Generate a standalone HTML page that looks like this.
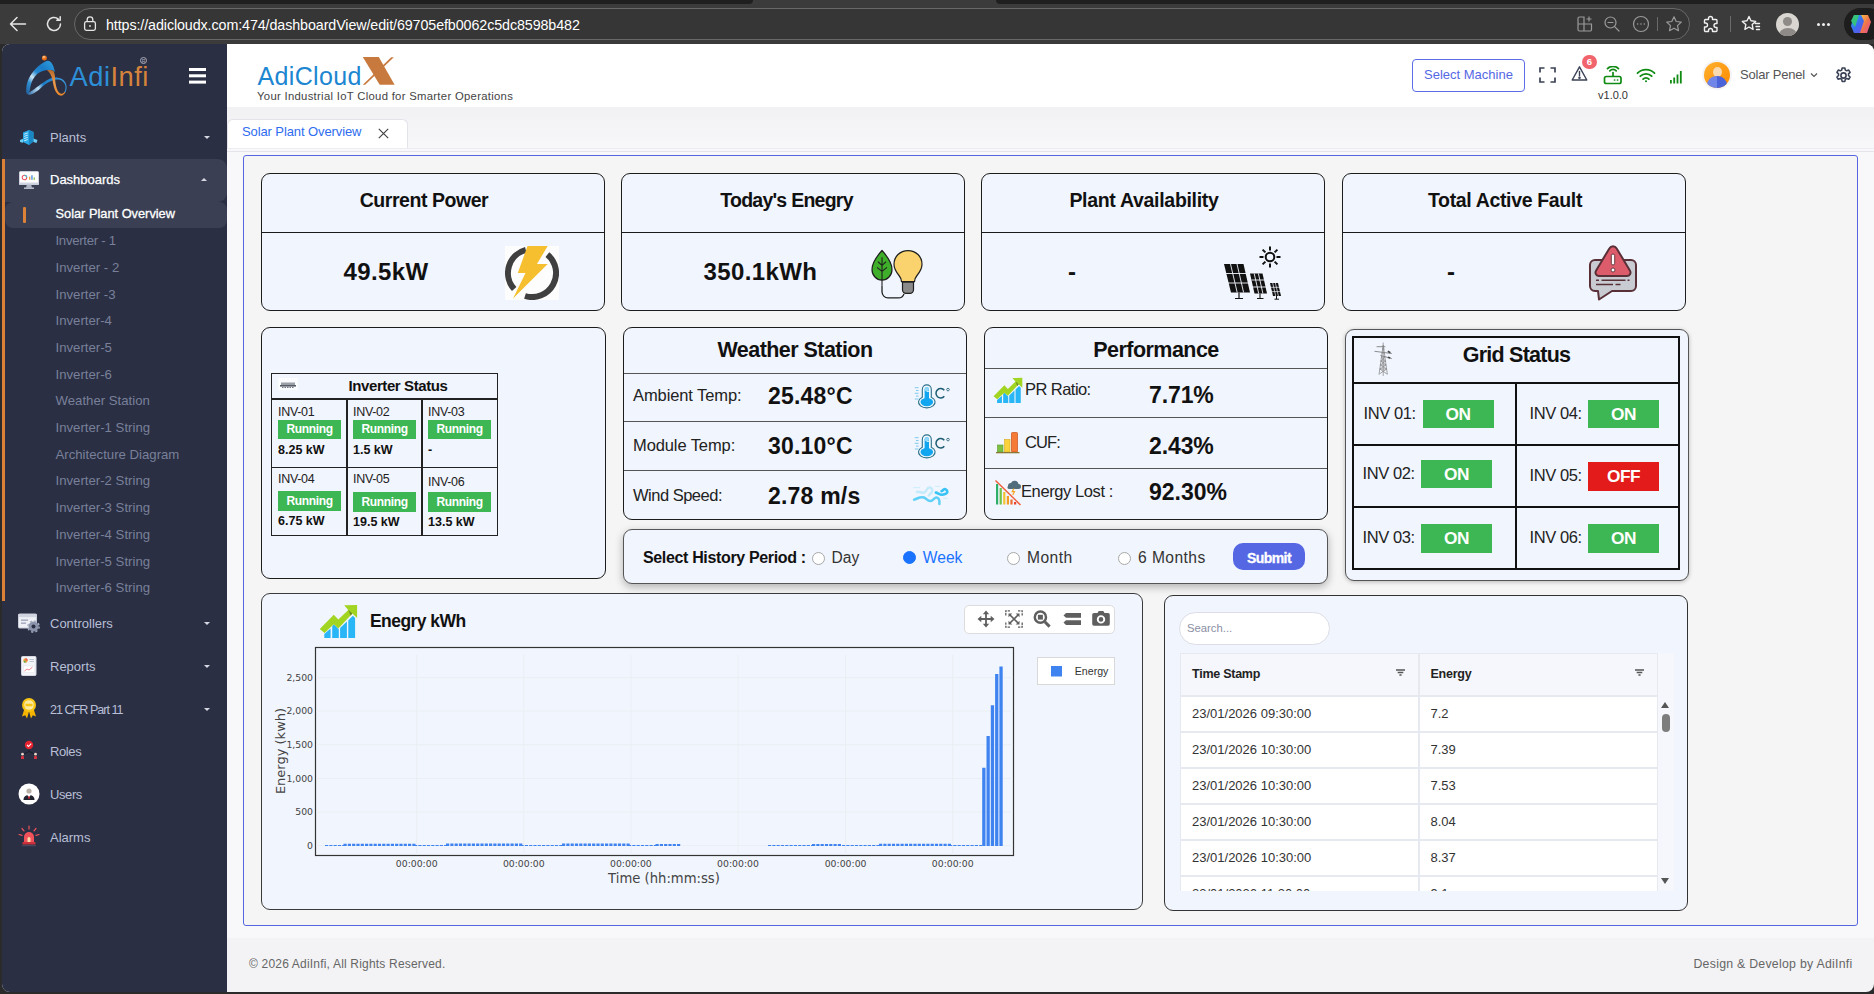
<!DOCTYPE html>
<html lang="en">
<head>
<meta charset="utf-8">
<title>Solar Plant Overview</title>
<style>
*{box-sizing:border-box;margin:0;padding:0}
html,body{width:1874px;height:994px;overflow:hidden;background:#f3f3f5;font-family:"Liberation Sans",sans-serif;}
.abs{position:absolute}
#root{position:relative;width:1874px;height:994px;overflow:hidden;background:#2b2b2b}
/* browser chrome */
#chrome{position:absolute;left:0;top:0;width:1874px;height:44px;background:#3b3b3b}
#chrome .strip{position:absolute;left:0;top:0;width:1874px;height:4px;background:#1f1f1f}
#url{position:absolute;left:74px;top:8px;width:1616px;height:32px;border-radius:16px;background:#363636;border:1px solid #686868}
#urltext{position:absolute;left:106px;top:16.700px;font-size:14.3px;line-height:17px;color:#fff;white-space:nowrap;letter-spacing:-0.1px}
/* app */
#app{position:absolute;left:2px;top:44px;width:1872px;height:947px;background:#f3f3f5;border-radius:10px 10px 10px 0;overflow:hidden}
#side{position:absolute;left:0;top:0;width:225px;height:947px;background:#2a2f43}
#head{position:absolute;left:225px;top:0;width:1647px;height:63px;background:#fff}
.t{position:absolute;white-space:nowrap;line-height:1}
.mi{position:absolute;margin-top:0.5px;left:48px;color:#b9bfd6;font-size:13px;white-space:nowrap;line-height:16px}
.si{position:absolute;left:53.5px;color:#79809a;font-size:13.2px;white-space:nowrap;line-height:16px}
.caret{position:absolute;left:202px;width:0;height:0;border-left:3px solid transparent;border-right:3px solid transparent;border-top:3.5px solid #d5d8e2}
.card{position:absolute;background:#f1f5fd;border:1px solid #1c1c1c;border-radius:9px}
.hl{position:absolute;height:1.5px;background:#1a1a1a}
.b{font-weight:bold}
.run{position:absolute;width:62.5px;height:19px;background:#3db654;color:#fff;font-weight:bold;font-size:12px;line-height:19px;text-align:center;letter-spacing:-0.35px;margin-left:0.4px}
.on{position:absolute;width:71px;height:28px;background:#3db654;color:#fff;font-weight:bold;font-size:17.3px;line-height:28px;text-align:center;letter-spacing:-0.45px}
.gl{position:absolute;font-size:16.5px;color:#222;white-space:nowrap;line-height:20px;letter-spacing:-0.4px;margin-left:0.5px}
.radio{position:absolute;width:13px;height:13px;margin:-0.5px;border:1px solid #a8a8a8;border-radius:50%;background:#fff}
.rl{position:absolute;margin-top:0.5px;font-size:15.6px;color:#333;line-height:20px;white-space:nowrap}
.cell{position:absolute;font-size:13px;color:#333;white-space:nowrap;line-height:16px}
</style>
</head>
<body>
<div id="root">
<div id="chrome">
  <div class="abs" style="left:0;top:0;width:753px;height:3.700px;background:#1f1f1f;border-radius:0 0 6px 0"></div>
  <div class="abs" style="left:996px;top:0;width:878px;height:3.700px;background:#1f1f1f;border-radius:0 0 0 6px"></div>
  <svg class="abs" style="left:8px;top:14px" width="20" height="20" viewBox="0 0 20 20" fill="none" stroke="#e6e6e6" stroke-width="1.5" stroke-linecap="round" stroke-linejoin="round"><path d="M17.5 10H2.5M9 3.5L2.5 10L9 16.5"/></svg>
  <svg class="abs" style="left:44px;top:14px" width="20" height="20" viewBox="0 0 20 20" fill="none" stroke="#e6e6e6" stroke-width="1.5" stroke-linecap="round" stroke-linejoin="round"><path d="M16.5 10a6.5 6.5 0 1 1-2.2-4.9M16.2 2.8v3.4h-3.4"/></svg>
  <div id="url"></div>
  <svg class="abs" style="left:82px;top:15px" width="16" height="18" viewBox="0 0 16 18" fill="none" stroke="#e6e6e6" stroke-width="1.3"><rect x="2.6" y="6.6" width="10.8" height="8.8" rx="1.8"/><path d="M5.2 6.6V4.6a2.8 2.8 0 0 1 5.6 0v2"/><circle cx="8" cy="11" r="0.9" fill="#e6e6e6" stroke="none"/></svg>
  <div id="urltext">https://adicloudx.com:474/dashboardView/edit/69705efb0062c5dc8598b482</div>
  <!-- right icons -->
  <svg class="abs" style="left:1576px;top:15px" width="18" height="18" viewBox="0 0 18 18" fill="none" stroke="#9a9a9a" stroke-width="1.2"><path d="M2 3.5a1.5 1.5 0 0 1 1.500-1.500H8v14H3.500A1.500 1.500 0 0 1 2 14.500zM8 9h7.500v5.500a1.500 1.500 0 0 1-1.500 1.500H8M2 9h6M13 1.500v5M10.500 4h5"/></svg>
  <svg class="abs" style="left:1603px;top:15px" width="18" height="18" viewBox="0 0 18 18" fill="none" stroke="#9a9a9a" stroke-width="1.2" stroke-linecap="round"><circle cx="7.500" cy="7.500" r="5.500"/><path d="M11.600 11.600L16 16M5 7.500h5"/></svg>
  <svg class="abs" style="left:1632px;top:15px" width="18" height="18" viewBox="0 0 18 18" fill="none" stroke="#9a9a9a" stroke-width="1.2"><circle cx="9" cy="9" r="7.500"/><circle cx="5.700" cy="9" r="0.800" fill="#9a9a9a" stroke="none"/><circle cx="9" cy="9" r="0.800" fill="#9a9a9a" stroke="none"/><circle cx="12.300" cy="9" r="0.800" fill="#9a9a9a" stroke="none"/></svg>
  <div class="abs" style="left:1657px;top:17px;width:1px;height:14px;background:#6a6a6a"></div>
  <svg class="abs" style="left:1665px;top:15px" width="18" height="18" viewBox="0 0 18 18" fill="none" stroke="#9a9a9a" stroke-width="1.2" stroke-linejoin="round"><path d="M9 1.800l2.200 4.700 5.100.600-3.800 3.500 1 5.100L9 13.200l-4.500 2.500 1-5.100L1.700 7.100l5.100-.600z"/></svg>
  <svg class="abs" style="left:1701px;top:14px" width="20" height="20" viewBox="0 0 20 20" fill="none" stroke="#f0f0f0" stroke-width="1.4" stroke-linejoin="round"><path d="M7.500 4.500a2 2 0 0 1 4 0V5.500h3.500a1 1 0 0 1 1 1V9.500h-1a2 2 0 0 0 0 4h1v3a1 1 0 0 1-1 1h-3.500v-1a2 2 0 0 0-4 0v1H4.500a1 1 0 0 1-1-1v-3.500h1a2 2 0 0 0 0-4h-1V6.500a1 1 0 0 1 1-1H7.500z"/></svg>
  <div class="abs" style="left:1730px;top:16px;width:1px;height:16px;background:#6a6a6a"></div>
  <svg class="abs" style="left:1741px;top:14px" width="20" height="20" viewBox="0 0 20 20" fill="none" stroke="#f0f0f0" stroke-width="1.4" stroke-linejoin="round" stroke-linecap="round"><path d="M8 2.500l2 4.300 4.700.600-3.500 3.200.9 4.700L8 13l-4.100 2.300.9-4.700L1.300 7.400 6 6.800zM14.500 9.500h4M15 12.500h3.500M15.500 15.500h3"/></svg>
  <div class="abs" style="left:1776px;top:13px;width:23px;height:23px;border-radius:50%;background:#d9d6d2;overflow:hidden"><div class="abs" style="left:7px;top:4px;width:9px;height:9px;border-radius:50%;background:#8d8a87"></div><div class="abs" style="left:2.500px;top:14.500px;width:18px;height:14px;border-radius:50%;background:#8d8a87"></div></div>
  <div class="abs" style="left:1817px;top:23px;width:3px;height:3px;border-radius:50%;background:#f0f0f0;box-shadow:5px 0 0 #f0f0f0,10px 0 0 #f0f0f0"></div>
  <div class="abs" style="left:1844px;top:8px;width:40px;height:32px;border-radius:16px;background:#1d1d1d"></div>
  <svg class="abs" style="left:1849px;top:12px" width="24" height="24" viewBox="0 0 24 24"><defs><linearGradient id="cp1" x1="0" y1="0" x2="1" y2="1"><stop offset="0" stop-color="#2bb3f3"/><stop offset=".5" stop-color="#3a6df0"/><stop offset="1" stop-color="#7a4ce0"/></linearGradient><linearGradient id="cp2" x1="0" y1="0" x2="1" y2="1"><stop offset="0" stop-color="#f6c744"/><stop offset=".5" stop-color="#f0744a"/><stop offset="1" stop-color="#e04aa0"/></linearGradient></defs><path d="M5 3h8l3 6-4 12H5l-3-7z" fill="url(#cp1)"/><path d="M12 3h7l3 7-4 11h-7l4-12z" fill="url(#cp2)"/><path d="M2 9l3-6h5L6 15z" fill="#35c27a"/></svg>
</div>

<div id="app" style="left:0;top:0;width:1874px;height:994px;border-radius:0;background:#f3f3f5;clip-path:inset(44px 0 2px 2px round 8px)">
<div id="side" style="left:2px;top:44px;width:225px;height:950px">
  <!-- logo -->
  <svg class="abs" style="left:18px;top:6px" width="60" height="50" viewBox="0 0 60 50">
    <defs><linearGradient id="lg1" gradientUnits="userSpaceOnUse" x1="6" y1="44" x2="34" y2="12"><stop offset="0" stop-color="#1d5f9e"/><stop offset=".25" stop-color="#2f8fd2"/><stop offset=".4" stop-color="#cfe6f5"/><stop offset=".55" stop-color="#2487d0"/><stop offset=".72" stop-color="#1b7cc8"/><stop offset="1" stop-color="#2f9fe0"/></linearGradient>
    <linearGradient id="lg3" gradientUnits="userSpaceOnUse" x1="7" y1="44" x2="46" y2="30"><stop offset="0" stop-color="#1d5f9e"/><stop offset=".3" stop-color="#bfe0f5"/><stop offset=".45" stop-color="#1b7cc8"/><stop offset="1" stop-color="#3a9be0"/></linearGradient>
    <linearGradient id="lg2" x1="0" y1="0" x2="0" y2="1"><stop offset="0" stop-color="#b86a2c"/><stop offset=".5" stop-color="#e89a4c"/><stop offset="1" stop-color="#e8862a"/></linearGradient>
    <radialGradient id="lg4" cx=".4" cy=".3" r=".7"><stop offset="0" stop-color="#ffd9b0"/><stop offset=".5" stop-color="#f07a1f"/><stop offset="1" stop-color="#d9601a"/></radialGradient></defs>
    <circle cx="24.4" cy="7.9" r="2.5" fill="url(#lg4)"/>
    <path d="M6.5 43.5C5.5 38 7 31 10 26.2 14 19.5 21 13 27.2 10.8c3.800-.8 6.800 5.200 7.800 11.200l-2-1.500c-2-.5-4-.5-6.100-.4-4.900.4-8.900 2.900-11.800 6.100-3.100 3.800-4.600 8.800-5.100 13-.2 2.300-1 3.800-3.500 4.300z" fill="url(#lg1)"/>
    <path d="M6.500 43.500C10 42.500 15 38.500 20.100 34.700c2.900-2.200 5.400-3.700 7.600-5 3.300-1.900 7.300-2.400 10.300-1.900s5.500 1.700 7 4.200c2.500 4 1.700 8.500.2 10.500l-.7-1c1.200-2 1.800-5.500-.3-8.500-1.700-2.500-4.200-3.400-6.200-3.500-3-.2-7 1.300-10.300 3.200-2.700 1.600-5.200 3.800-7.600 6-4.100 3.300-8.600 6.600-11.600 6.100z" fill="url(#lg3)"/>
    <path d="M27 20.200c2-.200 5-.200 6.500.800 1.500 3 1.500 6 1.700 9 .400 5 1.800 12 5.300 13.500 2 .700 3.500-.500 4.300-2l.5 1c-1.300 2.500-3.300 3.500-5.300 3-5-1.500-6.500-9.500-7.500-15.500-1-5-3-8-5.500-9.800z" fill="url(#lg2)"/>
  </svg>
  <div class="t" style="left:67.5px;top:16.4px;font-size:27.3px;line-height:34px;letter-spacing:0.5px"><span style="color:#2d8fd8">Adi</span><span style="color:#d6833c">Infi</span></div>
  <div class="t" style="left:138px;top:13px;font-size:7px;color:#aab;line-height:8px;border:0.6px solid #aab;border-radius:50%;width:7px;height:7px;text-align:center;font-size:5px;line-height:6px">R</div>
  <div class="abs" style="left:187px;top:23.5px;width:17px;height:3px;background:#fff;box-shadow:0 6.3px 0 #fff,0 12.6px 0 #fff"></div>

  <!-- Plants -->
  <svg class="abs" style="left:17px;top:85px" width="20" height="17" viewBox="0 0 20 17"><path d="M4 3.5L10 1l4.5 2v9.5L10 16 4 13z" fill="#29a9e6"/><path d="M10 1l4.5 2v9.5L10 16z" fill="#1b86c4"/><path d="M1 11l3-1.2v4L1 13zM14.5 9.5l4 1.5-1 3-3-1z" fill="#6ccdf5"/><path d="M5.2 5.2l3.6-1.3M5.2 7.4l3.6-1.3M5.2 9.6l3.6-1.3M5.2 11.8l3.6-1.3" stroke="#d9f3ff" stroke-width=".9"/></svg>
  <div class="mi" style="top:85px">Plants</div>
  <div class="caret" style="top:92px"></div>

  <!-- Dashboards -->
  <div class="abs" style="left:0;top:115px;width:3px;height:442px;background:#dc8238"></div>
  <div class="abs" style="left:3px;top:115px;width:222px;height:43px;background:#3a3f53;border-radius:0 9px 9px 0"></div>
  <svg class="abs" style="left:17px;top:127px" width="20" height="18.500" viewBox="0 0 22 20"><rect x=".5" y=".5" width="21" height="14" rx="1" fill="#fff" stroke="#d7dbe6"/><rect x="0" y="12.5" width="22" height="2.5" fill="#cfd4e0"/><path d="M8.5 15h5l.8 3.2H7.7z" fill="#aeb4c4"/><rect x="5.5" y="18" width="11" height="1.5" fill="#c7ccd8"/><circle cx="6" cy="7" r="2.5" fill="none" stroke="#e8555f" stroke-width="1.2"/><path d="M6 4.5A2.5 2.5 0 0 1 8.5 7" stroke="#3fb8c9" stroke-width="1.2" fill="none"/><rect x="11" y="6" width="1.5" height="3.5" fill="#f2a33c"/><rect x="13.5" y="4.5" width="1.5" height="5" fill="#4a90e2"/><rect x="16" y="7" width="1.5" height="2.5" fill="#8bc34a"/></svg>
  <div class="mi" style="top:127px;color:#fff;-webkit-text-stroke:0.25px #fff">Dashboards</div>
  <div class="abs" style="left:198.5px;top:134px;width:0;height:0;border-left:3px solid transparent;border-right:3px solid transparent;border-bottom:3.5px solid #d5d8e2"></div>
  <div class="abs" style="left:3px;top:158px;width:222px;height:26px;background:#3a3f53;border-radius:8px"></div>
  <div class="abs" style="left:21px;top:163px;width:3px;height:16px;background:#dc8238;border-radius:1px"></div>
  <div class="si" style="top:162px;color:#fff;-webkit-text-stroke:0.3px #fff;font-size:12.8px">Solar Plant Overview</div>
  <div class="si" style="top:189px;letter-spacing:-0.3px">Inverter - 1</div>
  <div class="si" style="top:216px">Inverter - 2</div>
  <div class="si" style="top:243px">Inverter -3</div>
  <div class="si" style="top:269px">Inverter-4</div>
  <div class="si" style="top:296px">Inverter-5</div>
  <div class="si" style="top:323px">Inverter-6</div>
  <div class="si" style="top:349px">Weather Station</div>
  <div class="si" style="top:376px">Inverter-1 String</div>
  <div class="si" style="top:403px">Architecture Diagram</div>
  <div class="si" style="top:429px">Inverter-2 String</div>
  <div class="si" style="top:456px">Inverter-3 String</div>
  <div class="si" style="top:483px">Inverter-4 String</div>
  <div class="si" style="top:510px">Inverter-5 String</div>
  <div class="si" style="top:536px">Inverter-6 String</div>

  <!-- Controllers -->
  <svg class="abs" style="left:16px;top:569px" width="22" height="20" viewBox="0 0 22 20"><rect x=".5" y="1" width="18" height="14" rx="1" fill="#eef0f6" stroke="#c9cedb"/><rect x=".5" y="1" width="18" height="3.2" fill="#cfd4e0"/><rect x="3" y="6.5" width="7" height="1.3" fill="#9aa1b5"/><rect x="3" y="9.5" width="5" height="1.3" fill="#9aa1b5"/><circle cx="15.5" cy="13.5" r="5" fill="#8b93aa"/><circle cx="15.5" cy="13.5" r="2" fill="#2a2f43"/><circle cx="15.5" cy="13.5" r="5.6" fill="none" stroke="#aab0c3" stroke-width="1.4" stroke-dasharray="2.2 2.2"/></svg>
  <div class="mi" style="top:571px">Controllers</div>
  <div class="caret" style="top:578px"></div>
  <!-- Reports -->
  <svg class="abs" style="left:19px;top:612px" width="16" height="20" viewBox="0 0 16 20"><rect x=".5" y=".5" width="14.5" height="19" rx="1" fill="#f3f4f8" stroke="#d5d8e2"/><circle cx="4.5" cy="4.5" r="2.2" fill="#f2a33c"/><path d="M4.5 2.3A2.2 2.2 0 0 1 6.7 4.5H4.5z" fill="#e8555f"/><path d="M4.5 4.5L2.5 5.5A2.2 2.2 0 0 0 4.5 6.7z" fill="#4caf50"/><rect x="8.5" y="3" width="4.5" height=".9" fill="#b9bfce"/><rect x="8.5" y="5" width="4.5" height=".9" fill="#b9bfce"/><rect x="2.5" y="10" width="11" height="6.5" fill="#fff" stroke="#e1e4ec" stroke-width=".5"/><path d="M3.5 15l2.5-2 2 1 3.5-3" stroke="#e8555f" stroke-width=".7" fill="none"/></svg>
  <div class="mi" style="top:614px">Reports</div>
  <div class="caret" style="top:621px"></div>
  <!-- 21 CFR -->
  <svg class="abs" style="left:18px;top:653px" width="18" height="22" viewBox="0 0 18 22"><path d="M4.5 11.5L2 19.5l3.2-1.2L7 21.5l2-7zM13.5 11.5l2.5 8-3.2-1.2-1.8 3.2-2-7z" fill="#f5b400"/><circle cx="9" cy="8" r="7" fill="#f9c513"/><circle cx="9" cy="8" r="4.8" fill="#fde9a0"/><rect x="5.5" y="6.8" width="7" height="2.4" rx=".6" fill="#f9c513"/></svg>
  <div class="mi" style="top:657px;font-size:12.6px;letter-spacing:-1px">21 CFR Part 11</div>
  <div class="caret" style="top:664px"></div>
  <!-- Roles -->
  <svg class="abs" style="left:17px;top:696px" width="20" height="20" viewBox="0 0 20 20"><path d="M10 10v1.5M10 11.5L4.5 14M10 11.5L15.5 14" stroke="#1b1e2b" stroke-width="1" fill="none"/><circle cx="10" cy="5" r="4.2" fill="#e52330"/><path d="M8 5l1.5 1.5L12.2 3.6" stroke="#fff" stroke-width="1.1" fill="none"/><circle cx="3.5" cy="14.2" r="1.4" fill="#e9d6c8"/><path d="M2 19v-1.8c0-1 .7-1.5 1.5-1.5s1.5.5 1.5 1.5V19z" fill="#d7323d"/><circle cx="16.5" cy="14.2" r="1.4" fill="#e9d6c8"/><path d="M15 19v-1.8c0-1 .7-1.5 1.5-1.5s1.5.5 1.5 1.5V19z" fill="#d7323d"/></svg>
  <div class="mi" style="top:699px;letter-spacing:-0.4px">Roles</div>
  <!-- Users -->
  <svg class="abs" style="left:16px;top:739px" width="22" height="22" viewBox="0 0 22 22"><circle cx="11" cy="11" r="10.5" fill="#fff"/><circle cx="11" cy="8" r="2.6" fill="#b9b0a8"/><path d="M5.5 17c0-3.3 2.3-5 5.5-5s5.5 1.7 5.5 5z" fill="#22252f"/><path d="M10 12h2l-.4 3.8h-1.2z" fill="#e52330"/><path d="M9 12l2 1.8L13 12" fill="#fff"/></svg>
  <div class="mi" style="top:742px;letter-spacing:-0.4px">Users</div>
  <!-- Alarms -->
  <svg class="abs" style="left:16px;top:781px" width="22" height="22" viewBox="0 0 22 22"><path d="M11 1v3M4 3.5l2 2.3M18 3.5l-2 2.3M1 9.5l3 .8M21 9.5l-3 .8" stroke="#f0525c" stroke-width="1.2" stroke-linecap="round"/><path d="M6 17v-5a5 5 0 0 1 10 0v5z" fill="#f0525c"/><path d="M9.5 17v-3.5a1.5 1.5 0 0 1 3 0V17z" fill="#ffd9a8"/><rect x="4.5" y="17" width="13" height="2.6" rx=".6" fill="#c9303b"/><rect x="4" y="20.2" width="14" height="1" fill="#4b5066"/></svg>
  <div class="mi" style="top:785px">Alarms</div>
</div>
<!-- header -->
<div class="abs" style="left:227px;top:44px;width:1647px;height:63px;background:#fff"></div>
<div class="t" style="left:257.5px;top:59.4px;font-size:25px;line-height:34px;color:#1c86d1;letter-spacing:0.35px">AdiCloud</div>
<svg class="abs" style="left:360px;top:55px" width="38" height="32" viewBox="360 55 38 32"><path d="M362.800 57h16L394.600 84.700h-14.900z" fill="#c87a3e"/><path d="M391.200 57.300h2.600L365.200 84.700h-2.400z" fill="#c87a3e"/></svg>
<div class="t" style="left:257px;top:89.600px;font-size:11.300px;line-height:13px;color:#444;letter-spacing:0.3px">Your Industrial IoT Cloud for Smarter Operations</div>
<div class="abs" style="left:1412px;top:59px;width:113px;height:33px;border:1px solid #5b6ee8;border-radius:4px;background:#fff"></div>
<div class="t" style="left:1412px;top:67px;width:113px;text-align:center;font-size:13px;line-height:16px;color:#5468e4">Select Machine</div>
<svg class="abs" style="left:1539px;top:67px" width="17" height="16" viewBox="0 0 17 16" fill="none" stroke="#3b4256" stroke-width="1.7"><path d="M1 5.5V1h4.5M11.5 1H16v4.5M16 10.5V15h-4.5M5.5 15H1v-4.5"/></svg>
<svg class="abs" style="left:1571px;top:65px" width="17" height="17" viewBox="0 0 17 17" fill="none" stroke="#3b4256" stroke-width="1.4" stroke-linejoin="round"><path d="M8.5 1.8L15.8 15H1.2z"/><path d="M8.5 6.5v4.2" stroke-linecap="round"/><circle cx="8.5" cy="12.7" r=".6" fill="#3b4256"/></svg>
<div class="abs" style="left:1582px;top:54.5px;width:15px;height:14px;border-radius:7px;background:#f1646c"></div>
<div class="t b" style="left:1582px;top:56.5px;width:15px;text-align:center;font-size:9.5px;line-height:10px;color:#fff">6</div>
<svg class="abs" style="left:1603px;top:66px" width="20" height="19" viewBox="0 0 20 19" fill="none" stroke="#0f8a12" stroke-width="1.7" stroke-linecap="round"><rect x="1.5" y="10.5" width="16.5" height="7" rx="1.8"/><path d="M10 10V6.5"/><path d="M6.8 4.8a4.5 4.5 0 0 1 6.4 0M4.5 2.6a7.8 7.8 0 0 1 11 0"/><path d="M11.5 14h.1M14.5 14h.1"/></svg>
<div class="t" style="left:1592px;top:89px;width:42px;text-align:center;font-size:11px;line-height:13px;color:#333">v1.0.0</div>
<svg class="abs" style="left:1636px;top:68px" width="20" height="15" viewBox="0 0 20 15" fill="none" stroke="#0f8a12" stroke-width="1.8" stroke-linecap="round"><path d="M1.5 5.2a12 12 0 0 1 17 0M4.3 8.2a8 8 0 0 1 11.4 0M7.1 11.1a4 4 0 0 1 5.8 0"/><circle cx="10" cy="13.3" r="1" fill="#0f8a12" stroke="none"/></svg>
<svg class="abs" style="left:1669px;top:70px" width="14" height="14" viewBox="0 0 14 14" fill="#0f8a12"><rect x="1" y="10" width="1.8" height="3.5"/><rect x="4.3" y="7.5" width="1.8" height="6"/><rect x="7.6" y="4.5" width="1.8" height="9"/><rect x="10.9" y="1" width="1.8" height="12.5"/></svg>
<div class="abs" style="left:1702px;top:60px;width:30px;height:30px;border-radius:50%;background:#f4f4f7"></div>
<div class="abs" style="left:1704px;top:62px;width:26px;height:26px;border-radius:50%;background:linear-gradient(135deg,#ffb02e,#ff8a00);overflow:hidden"><div class="abs" style="left:8.5px;top:5px;width:9px;height:10px;border-radius:50%;background:#f8d9b0"></div><div class="abs" style="left:3px;top:14px;width:20px;height:16px;border-radius:9px 9px 0 0;background:linear-gradient(90deg,#6f86e8 50%,#4a63d9 50%)"></div></div>
<div class="t" style="left:1740px;top:67px;font-size:13px;line-height:16px;color:#555;letter-spacing:-0.2px">Solar Penel</div>
<svg class="abs" style="left:1810px;top:72px" width="8" height="6" viewBox="0 0 8 6" fill="none" stroke="#555" stroke-width="1.2"><path d="M1 1.5l3 3 3-3"/></svg>
<svg class="abs" style="left:1834px;top:66px" width="19" height="19" viewBox="0 0 24 24" fill="none" stroke="#3b4256" stroke-width="2" stroke-linejoin="round"><circle cx="12" cy="12" r="3.3"/><path d="M10.3 2.5h3.4l.6 2.7 1.7.9 2.6-.9 1.7 2.9-2 1.9v2l2 1.9-1.7 2.9-2.6-.9-1.7.9-.6 2.7h-3.4l-.6-2.7-1.7-.9-2.6.9-1.7-2.9 2-1.9v-2l-2-1.9 1.7-2.9 2.6.9 1.7-.9z"/></svg>

<!-- tab bar -->
<div class="abs" style="left:227px;top:107px;width:1647px;height:831px;background:#f8f8fa"></div>
<div class="abs" style="left:227px;top:107px;width:1647px;height:44px;background:linear-gradient(#f1f1f4,#f8f8fa)"></div>
<div class="abs" style="left:227px;top:119px;width:181px;height:29px;background:#fff;border:1px solid #e3e4ea;border-bottom:none;border-radius:6px 6px 0 0"></div>
<div class="abs" style="left:227px;top:148px;width:1647px;height:1px;background:#ececf1"></div>
<div class="abs" style="left:227px;top:151px;width:1647px;height:1px;background:#e4e5ea"></div>
<div class="t" style="left:242px;top:124px;font-size:13px;line-height:16px;color:#2e6cf0;letter-spacing:-0.1px">Solar Plant Overview</div>
<svg class="abs" style="left:378px;top:128px" width="11" height="11" viewBox="0 0 11 11" stroke="#444" stroke-width="1.2"><path d="M.8.8l9.4 9.4M10.2.8L.8 10.2"/></svg>

<!-- dashboard container -->
<div class="abs" style="left:243px;top:155px;width:1615px;height:771px;background:#f5f5f5;border:1px solid #5567e0;border-radius:3px"></div>

<!-- footer -->

<div class="t" style="left:249px;top:957px;font-size:12px;line-height:14px;color:#666;letter-spacing:0.19px">© 2026 AdiInfi, All Rights Reserved.</div>
<div class="t" style="right:21.500px;top:957px;font-size:12.300px;line-height:14px;color:#666;letter-spacing:0.27px">Design &amp; Develop by AdiInfi</div>
<!-- ROW 1 -->
<div class="card" style="left:261px;top:173px;width:344px;height:138px"></div>
<div class="hl" style="left:262px;top:231.5px;width:342px"></div>
<div class="t b" style="left:261px;top:187.700px;width:326px;text-align:center;font-size:19.5px;line-height:24px;color:#111;letter-spacing:-0.45px">Current Power</div>
<div class="t b" style="left:343.500px;top:257px;font-size:24px;line-height:30px;color:#111;letter-spacing:0.4px">49.5kW</div>
<div class="abs" style="left:505px;top:246px;width:54px;height:54px;background:#fdfdfd"></div>
<svg class="abs" style="left:505px;top:246px" width="54" height="54" viewBox="0 0 54 54"><path d="M9.200 43.100A24 24 0 0 1 20.800 3.800" fill="none" stroke="#3f3f3f" stroke-width="6"/><path d="M42.400 8.600A24 24 0 0 1 20 50" fill="none" stroke="#3f3f3f" stroke-width="6"/><path d="M22.500 0H42.700L32 18H42.700L8 52.500L20.500 27H12.800z" fill="#f5bf2f"/></svg>

<div class="card" style="left:621px;top:173px;width:344px;height:138px"></div>
<div class="hl" style="left:622px;top:231.5px;width:342px"></div>
<div class="t b" style="left:621px;top:187.700px;width:331px;text-align:center;font-size:19.5px;line-height:24px;color:#111;letter-spacing:-0.75px">Today's Enegry</div>
<div class="t b" style="left:703.500px;top:257px;font-size:24px;line-height:30px;color:#111;letter-spacing:0.4px">350.1kWh</div>
<svg class="abs" style="left:870px;top:248.500px" width="54" height="53" viewBox="0 0 54 52" preserveAspectRatio="none"><path d="M12 1.500C6 8 2 14 2 20c0 6 4.500 10.500 10 10.500S22 26 22 20C22 14 18 8 12 1.500z" fill="#3fae2a" stroke="#1f1f1f" stroke-width="1.200"/><path d="M12 8v28M12 16l-4-3.500M12 16l4-3.500M12 22l-5-4M12 22l5-4" stroke="#1f1f1f" stroke-width="1.100" fill="none"/><path d="M12 36v6a6 6 0 0 0 6 6h10a6 6 0 0 0 6-4" stroke="#1f1f1f" stroke-width="1.300" fill="none"/><path d="M38 1.500c-8 0-14 6-14 13.500 0 5 2.500 8 5 11 1.500 1.800 2.500 3.500 2.500 6h13c0-2.500 1-4.200 2.500-6 2.500-3 5-6 5-11C52 7.500 46 1.500 38 1.500z" fill="#fbd36e" stroke="#1f1f1f" stroke-width="1.200"/><path d="M32.500 32.500h11v7.500a3.500 3.500 0 0 1-3.500 3.500h-4a3.500 3.500 0 0 1-3.500-3.500z" fill="#8a8a8a" stroke="#1f1f1f" stroke-width="1.200"/></svg>

<div class="card" style="left:981px;top:173px;width:344px;height:138px"></div>
<div class="hl" style="left:982px;top:231.5px;width:342px"></div>
<div class="t b" style="left:981px;top:187.700px;width:326px;text-align:center;font-size:19.5px;line-height:24px;color:#111;letter-spacing:-0.3px">Plant Availability</div>
<div class="t b" style="left:1068px;top:257px;font-size:24px;line-height:30px;color:#111">-</div>
<svg class="abs" style="left:1223px;top:245px" width="60" height="56" viewBox="0 0 60 56"><g stroke="#111" stroke-width="2" stroke-linecap="butt"><circle cx="47" cy="12" r="4.300" fill="none"/><path d="M47 1.500v4M47 18.500v4M36.500 12h4M53.500 12h4M39.600 4.600l2.800 2.800M51.600 16.600l2.800 2.800M39.600 19.400l2.800-2.800M51.600 7.400l2.800-2.800"/></g><path d="M1 19h19.500l6.500 28.500H8z" fill="#111"/><path d="M7.500 19l6.700 28.500M14 19l6.600 28.500M3 28.500h20M5 38h20.500" stroke="#f1f5fd" stroke-width=".9"/><path d="M16 47.500v6M12 53.500h8" stroke="#111" stroke-width="1.200"/><path d="M27 28.500h12.500l4.500 20H31.500z" fill="#111"/><path d="M31.200 28.500l4.500 20M35.400 28.500l4.500 20M28.500 35h13M30 42h13" stroke="#f1f5fd" stroke-width=".9"/><path d="M37 48.500v5M34 53.500h6.500" stroke="#111" stroke-width="1.100"/><path d="M47 38h8l3 13h-8z" fill="#111"/><path d="M49.700 38l3 13M52.400 38l3 13M48 42.300h8.500M49 46.600h8.500" stroke="#f1f5fd" stroke-width=".7"/><path d="M53.500 51v3M51.500 54.200h4.500" stroke="#111" stroke-width="1"/></svg>

<div class="card" style="left:1342px;top:173px;width:344px;height:138px"></div>
<div class="hl" style="left:1343px;top:231.5px;width:342px"></div>
<div class="t b" style="left:1342px;top:187.700px;width:326px;text-align:center;font-size:19.5px;line-height:24px;color:#111;letter-spacing:-0.35px">Total Active Fault</div>
<div class="t b" style="left:1447px;top:257px;font-size:24px;line-height:30px;color:#111">-</div>
<svg class="abs" style="left:1588px;top:245px" width="50" height="56" viewBox="0 0 50 56"><path d="M7 15h36a5 5 0 0 1 5 5v21a5 5 0 0 1-5 5H24l-13 8.500-1-8.500H7a5 5 0 0 1-5-5V20a5 5 0 0 1 5-5z" fill="#c9cbd2" stroke="#5a3038" stroke-width="2" stroke-linejoin="round"/><path d="M21.500 3.200a4 4 0 0 1 7 0l13.500 22.500a3.500 3.500 0 0 1-3 5.300H11a3.500 3.500 0 0 1-3-5.300z" fill="#dd5c6b" stroke="#5a3038" stroke-width="2" stroke-linejoin="round"/><rect x="23.300" y="9" width="3.400" height="11" rx="1.700" fill="#fff" stroke="#5a3038" stroke-width=".9"/><circle cx="25" cy="25" r="2" fill="#fff" stroke="#5a3038" stroke-width=".9"/><path d="M8 35.300h3M13.500 35.300h24M39.500 35.300h2M8 39.500h17M27.500 39.500h5" stroke="#5a3038" stroke-width="1.400"/></svg>
<!-- ROW 2: inverter status -->
<div class="card" style="left:261px;top:327px;width:345px;height:252px"></div>
<div class="abs" style="left:271px;top:373px;width:227px;height:163px;border:1.5px solid #222"></div>
<div class="abs" style="left:271px;top:398px;width:227px;height:1.5px;background:#222"></div>
<div class="abs" style="left:271px;top:466.5px;width:227px;height:1.5px;background:#222"></div>
<div class="abs" style="left:346px;top:398px;width:1.5px;height:138px;background:#222"></div>
<div class="abs" style="left:421px;top:398px;width:1.5px;height:138px;background:#222"></div>
<svg class="abs" style="left:278px;top:378px" width="20" height="12" viewBox="0 0 20 12"><rect x="0" y="0" width="20" height="12" fill="#fbfcfe"/><rect x="3" y="4.500" width="14" height="2.500" fill="#9aa0a8"/><rect x="2" y="7" width="16" height="1.600" fill="#555c66"/><path d="M4 9.500h12" stroke="#6b7280" stroke-width="1" stroke-dasharray="1.500 1"/></svg>
<div class="t b" style="left:298px;top:377px;width:200px;text-align:center;font-size:15px;line-height:18px;color:#111;letter-spacing:-0.4px">Inverter Status</div>
<div class="t" style="left:278px;top:405px;font-size:12.5px;line-height:15px;color:#222;letter-spacing:-0.3px">INV-01</div>
<div class="run" style="left:278px;top:420px">Running</div>
<div class="t b" style="left:278px;top:443px;font-size:12.5px;line-height:15px;color:#111">8.25 kW</div>
<div class="t" style="left:353px;top:405px;font-size:12.5px;line-height:15px;color:#222;letter-spacing:-0.3px">INV-02</div>
<div class="run" style="left:353px;top:420px">Running</div>
<div class="t b" style="left:353px;top:443px;font-size:12.5px;line-height:15px;color:#111">1.5 kW</div>
<div class="t" style="left:428px;top:405px;font-size:12.5px;line-height:15px;color:#222;letter-spacing:-0.3px">INV-03</div>
<div class="run" style="left:428px;top:420px">Running</div>
<div class="t b" style="left:428px;top:443px;font-size:12.5px;line-height:15px;color:#111">-</div>
<div class="t" style="left:278px;top:472.300px;font-size:12.5px;line-height:15px;color:#222;letter-spacing:-0.3px">INV-04</div>
<div class="run" style="left:278px;top:491px;height:20px;line-height:20px">Running</div>
<div class="t b" style="left:278px;top:514px;font-size:12.5px;line-height:15px;color:#111">6.75 kW</div>
<div class="t" style="left:353px;top:472.300px;font-size:12.5px;line-height:15px;color:#222;letter-spacing:-0.3px">INV-05</div>
<div class="run" style="left:353px;top:492px;height:20px;line-height:20px">Running</div>
<div class="t b" style="left:353px;top:514.600px;font-size:12.5px;line-height:15px;color:#111">19.5 kW</div>
<div class="t" style="left:428px;top:475px;font-size:12.5px;line-height:15px;color:#222;letter-spacing:-0.3px">INV-06</div>
<div class="run" style="left:428px;top:492px;height:20px;line-height:20px">Running</div>
<div class="t b" style="left:428px;top:514.600px;font-size:12.5px;line-height:15px;color:#111">13.5 kW</div>

<!-- weather station -->
<div class="card" style="left:623px;top:327px;width:344px;height:193px"></div>
<div class="hl" style="left:624px;top:373px;width:342px;height:1.300px;background:#555"></div>
<div class="hl" style="left:624px;top:421px;width:342px;height:1.300px;background:#555"></div>
<div class="hl" style="left:624px;top:470px;width:342px;height:1.300px;background:#555"></div>
<div class="t b" style="left:623px;top:337px;width:344px;text-align:center;font-size:21.5px;line-height:26px;color:#111;letter-spacing:-0.55px">Weather Station</div>
<div class="t" style="left:633px;top:385px;font-size:16.5px;line-height:20px;color:#222;letter-spacing:-0.1px">Ambient Temp:</div>
<div class="t b" style="left:768px;top:381.7px;font-size:23px;line-height:28px;color:#111;letter-spacing:0.2px">25.48°C</div>
<div class="t" style="left:633px;top:435px;font-size:16.5px;line-height:20px;color:#222;letter-spacing:-0.1px">Module Temp:</div>
<div class="t b" style="left:768px;top:431.7px;font-size:23px;line-height:28px;color:#111;letter-spacing:0.2px">30.10°C</div>
<div class="t" style="left:633px;top:485px;font-size:16.5px;line-height:20px;color:#222;letter-spacing:-0.5px">Wind Speed:</div>
<div class="t b" style="left:768px;top:481.7px;font-size:23px;line-height:28px;color:#111;letter-spacing:0.2px">2.78 m/s</div>
<svg class="abs" style="left:913px;top:384px" width="38" height="25" viewBox="0 0 38 25"><path d="M1.800 3.700h3.700M3 6.500h2.500M1.800 9.300h3.700M3 12.100h2.500M1.800 15h3.700" stroke="#6fc4ea" stroke-width=".9"/><path d="M9.300 5.400a4.500 4.500 0 0 1 9 0V13.200A8.300 5.800 0 1 1 9.300 13.200z" fill="#eef8fe" stroke="#2a6f88" stroke-width="1.100"/><ellipse cx="13.800" cy="18.100" rx="6.300" ry="4.100" fill="#12a6f0"/><rect x="11.600" y="3.300" width="4.400" height="13" rx="2" fill="#12a6f0"/><rect x="11.600" y="3.300" width="4.400" height="4.200" rx="2" fill="#8fd6f7"/><path d="M13.800 7.500h2.200" stroke="#eef8fe" stroke-width=".8"/><path d="M31.300 6.300a4.700 4.700 0 1 0 0 6" fill="none" stroke="#1d5d73" stroke-width="1.500"/><circle cx="35" cy="5.600" r="1.300" fill="none" stroke="#1d5d73" stroke-width=".8"/></svg>
<svg class="abs" style="left:913px;top:434px" width="38" height="25" viewBox="0 0 38 25"><path d="M1.800 3.700h3.700M3 6.500h2.500M1.800 9.300h3.700M3 12.100h2.500M1.800 15h3.700" stroke="#6fc4ea" stroke-width=".9"/><path d="M9.300 5.400a4.500 4.500 0 0 1 9 0V13.200A8.300 5.800 0 1 1 9.300 13.200z" fill="#eef8fe" stroke="#2a6f88" stroke-width="1.100"/><ellipse cx="13.800" cy="18.100" rx="6.300" ry="4.100" fill="#12a6f0"/><rect x="11.600" y="3.300" width="4.400" height="13" rx="2" fill="#12a6f0"/><rect x="11.600" y="3.300" width="4.400" height="4.200" rx="2" fill="#8fd6f7"/><path d="M13.800 7.500h2.200" stroke="#eef8fe" stroke-width=".8"/><path d="M31.300 6.300a4.700 4.700 0 1 0 0 6" fill="none" stroke="#1d5d73" stroke-width="1.500"/><circle cx="35" cy="5.600" r="1.300" fill="none" stroke="#1d5d73" stroke-width=".8"/></svg>
<svg class="abs" style="left:912px;top:484px" width="38" height="22" viewBox="0 0 38 22" fill="none" stroke-linecap="round" stroke-linejoin="round"><path d="M4.900 7.900c2.500-.8 4.500 1.200 7 .7 3-.6 2.500-5 5.500-5 2.600 0 3.600 2.800 2.300 4.600-1 1.400-2 2.200-2.800 3.200" stroke="#c3ebfb" stroke-width="2.500"/><path d="M2.100 15.600c3.500-1 6-3.300 9.800-2.100 2.700.9 3.700 3.700 6.400 3.500 3-.2 3.800-3.700 6.300-3.500 2.200.2 3 3.500 2.800 6.400" stroke="#5fd0f7" stroke-width="2.500"/><path d="M23.900 8.600c2 .3 4 2.500 6.400 2.100 2.600-.4 5.600-1.500 4.900-3.500-.5-1.700-2.400-2.600-3.500-1.700-.9.700-1.200 1.200-2.200 1.700" stroke="#38c3f5" stroke-width="2.600"/><path d="M1.600 3.600h6M23.500 2.400h4.500M31.500 14.300h3.500" stroke="#c3ebfb" stroke-width=".8"/></svg>

<!-- performance -->
<div class="card" style="left:984px;top:327px;width:344px;height:193px"></div>
<div class="hl" style="left:985px;top:368px;width:342px;height:1.300px;background:#555"></div>
<div class="hl" style="left:985px;top:417px;width:342px;height:1.300px;background:#555"></div>
<div class="hl" style="left:985px;top:468px;width:342px;height:1.300px;background:#555"></div>
<div class="t b" style="left:984px;top:337px;width:344px;text-align:center;font-size:21.5px;line-height:26px;color:#111;letter-spacing:-0.55px">Performance</div>
<svg class="abs" style="left:993px;top:377px" width="30" height="27" viewBox="0 0 39 35"><path d="M5.300 29.900L11.600 24.400V33.900H5.300zM13.200 22.200L14.800 20.300 19.800 25.300V33.900H13.200zM21.100 24L27.900 17.600V33.900H21.100zM29.300 16.300L33.900 11.700 36.100 14V33.900H29.300z" fill="#29b6f6"/><path d="M0.750 24.900L14.800 10.800 19.300 15.400 29.300 5.900 25.200 1.300 38.100 1.050V14L33.400 9.500 19.300 24.400 14.800 20.300 5.500 28.950z" fill="#a2d422"/><path d="M29.300 5.900L33.400 9.500 31.600 11.800z" fill="#6b8e23"/></svg>
<div class="t" style="left:1025px;top:379px;font-size:16.5px;line-height:20px;color:#222;letter-spacing:-0.55px">PR Ratio:</div>
<div class="t b" style="left:1149px;top:381.200px;font-size:23px;line-height:28px;color:#111;letter-spacing:-0.1px">7.71%</div>
<svg class="abs" style="left:995px;top:430px" width="26" height="24" viewBox="0 0 26 24"><rect x="2.500" y="15" width="5.500" height="7" fill="#7cc142" stroke="#5a9a2c" stroke-width=".6"/><rect x="9.500" y="9.500" width="5.500" height="12.500" fill="#f9d23c" stroke="#d9a91c" stroke-width=".6"/><rect x="16.500" y="2.500" width="6" height="19.500" rx=".8" fill="#f47a36" stroke="#c9501c" stroke-width=".7"/><rect x="1" y="22" width="23.500" height="1.300" fill="#8a7a3a"/></svg>
<div class="t" style="left:1025px;top:432px;font-size:16.5px;line-height:20px;color:#222;letter-spacing:-0.9px">CUF:</div>
<div class="t b" style="left:1149px;top:432.300px;font-size:23px;line-height:28px;color:#111;letter-spacing:-0.1px">2.43%</div>
<svg class="abs" style="left:994px;top:478px" width="28" height="28" viewBox="0 0 28 28"><rect x="2" y="6" width="2.200" height="20.500" fill="#2fae6a"/><rect x="5.600" y="10" width="2.200" height="16.500" fill="#6fc24a"/><rect x="9.200" y="14" width="2.200" height="12.500" fill="#f2c230"/><rect x="12.800" y="18" width="2.200" height="8.500" fill="#f59a23"/><rect x="16.400" y="21.500" width="2.200" height="5" fill="#ef6a2f"/><rect x="20" y="24" width="2.200" height="2.500" fill="#e8432f"/><path d="M1.500 2.500l25 24.500" stroke="#f0603f" stroke-width="1.500"/><path d="M14 8a3 3 0 0 1 3-3 4 4 0 0 1 7.500 1 2.500 2.500 0 0 1 0 5H15a2 2 0 0 1-1-3z" fill="#4f6d7a"/><path d="M20 10.500l-1.800 3.200h2.300l-1.800 3.300" stroke="#f5a623" stroke-width="1.200" fill="none"/></svg>
<div class="t" style="left:1021px;top:481px;font-size:16.5px;line-height:20px;color:#222;letter-spacing:-0.4px">Energy Lost :</div>
<div class="t b" style="left:1149px;top:478px;font-size:23px;line-height:28px;color:#111">92.30%</div>

<!-- history period -->
<div class="card" style="left:623px;top:529px;width:705px;height:55px;border-color:#555;box-shadow:0 3px 8px rgba(0,0,0,.28)"></div>
<div class="t b" style="left:643px;top:547.500px;font-size:16px;line-height:20px;color:#111;letter-spacing:-0.35px">Select History Period :</div>
<div class="radio" style="left:812px;top:552px"></div>
<div class="rl" style="left:831.5px;top:547px">Day</div>
<div class="radio" style="left:903.5px;top:551.5px;width:13px;height:13px;background:#1a73ff;border-color:#1a73ff"></div>
<div class="rl" style="left:922.800px;top:547px;color:#1a73ff">Week</div>
<div class="radio" style="left:1007.5px;top:552px"></div>
<div class="rl" style="left:1027px;top:547px;letter-spacing:0.45px">Month</div>
<div class="radio" style="left:1118px;top:552px"></div>
<div class="rl" style="left:1138px;top:547px;letter-spacing:0.45px">6 Months</div>
<div class="abs" style="left:1233px;top:543.400px;width:72px;height:26.600px;border-radius:10px;background:#5567e3"></div>
<div class="t b" style="left:1233px;top:549.500px;width:72px;text-align:center;font-size:14px;line-height:17px;color:#fff;letter-spacing:-0.55px;-webkit-text-stroke:0.3px #fff">Submit</div>

<!-- grid status -->
<div class="card" style="left:1345px;top:329px;width:344px;height:252px;border-color:#555;box-shadow:0 1px 4px rgba(0,0,0,.25)"></div>
<div class="abs" style="left:1351.5px;top:336px;width:328.500px;height:234px;border:2px solid #111"></div>
<div class="abs" style="left:1352px;top:381.5px;width:327px;height:2px;background:#111"></div>
<div class="abs" style="left:1352px;top:443.5px;width:327px;height:2px;background:#111"></div>
<div class="abs" style="left:1352px;top:505.5px;width:327px;height:2px;background:#111"></div>
<div class="abs" style="left:1514.5px;top:382px;width:2px;height:187px;background:#111"></div>
<svg class="abs" style="left:1373px;top:341px" width="20" height="36" viewBox="0 0 20 36" fill="none" stroke="#6e6e6e" stroke-width=".7" opacity=".85"><path d="M10.200 1.600V35M10.200 4L6 33.500M10.200 4l4.200 29.500M9 8h2.500M8.600 12h3.300M8.200 16h4M7.800 20h4.800M7.300 24h5.800M6.800 28h6.800M8.200 16l4.400 4M12.200 16l-4.400 4M7.800 20l5.300 4M12.600 20l-5.300 4M7.300 24l6.300 4M13.100 24l-6.300 4M6.800 28l7.200 5M13.600 28l-7.200 5"/><path d="M3.600 5.700h8.700M1.500 10.300l17.300 2.200M7.400 14.400l11.400 3.200" stroke-width=".9"/><path d="M14.800 10.200l2.600 1.600M15 16.200l2.200.9" stroke="#2a2a2a" stroke-width="1.600"/></svg>
<div class="t b" style="left:1352px;top:341.600px;width:329px;text-align:center;font-size:21.500px;line-height:26px;color:#111;letter-spacing:-0.75px">Grid Status</div>
<div class="gl" style="left:1363px;top:403px">INV 01:</div><div class="on" style="left:1422.5px;top:400px">ON</div>
<div class="gl" style="left:1362px;top:463px">INV 02:</div><div class="on" style="left:1421px;top:460px">ON</div>
<div class="gl" style="left:1362px;top:527px">INV 03:</div><div class="on" style="left:1421px;top:524px;height:28.5px">ON</div>
<div class="gl" style="left:1529px;top:403px">INV 04:</div><div class="on" style="left:1588px;top:400px">ON</div>
<div class="gl" style="left:1529px;top:465px">INV 05:</div><div class="on" style="left:1588px;top:462px;height:29px;line-height:29px;background:#e31b1b">OFF</div>
<div class="gl" style="left:1529px;top:527px">INV 06:</div><div class="on" style="left:1588px;top:524px;height:28.5px">ON</div>
<!-- ROW 3: chart -->
<div class="card" style="left:261px;top:593.300px;width:882px;height:316.700px;border:1.200px solid #3a3a3a"></div>
<svg class="abs" style="left:319px;top:604px" width="39" height="35" viewBox="0 0 39 35"><path d="M5.300 29.900L11.600 24.400V33.900H5.300zM13.200 22.200L14.800 20.300 19.800 25.300V33.900H13.200zM21.100 24L27.900 17.600V33.900H21.100zM29.300 16.300L33.900 11.700 36.100 14V33.900H29.300z" fill="#29b6f6"/><path d="M0.750 24.900L14.800 10.800 19.300 15.400 29.300 5.900 25.200 1.300 38.100 1.050V14L33.400 9.500 19.300 24.400 14.800 20.300 5.500 28.950z" fill="#a2d422"/><path d="M29.300 5.900L33.400 9.500 31.600 11.800z" fill="#6b8e23"/></svg>
<div class="t b" style="left:370px;top:610px;font-size:17.5px;line-height:22px;color:#111;letter-spacing:-0.55px">Enegry kWh</div>
<div class="abs" style="left:964px;top:605px;width:151px;height:29px;background:#fff;border:1px solid #dcdcdc;border-radius:5px"></div>
<svg class="abs" style="left:977px;top:610px" width="18" height="18" viewBox="0 0 18 18" fill="none" stroke="#5f5f5f" stroke-width="1.800"><path d="M9 2.500v13M2.500 9h13"/><path d="M5.800 4.300L9 .5l3.200 3.800zM5.800 13.700L9 17.500l3.200-3.800zM4.300 5.800L.5 9l3.800 3.200zM13.700 5.800L17.500 9l-3.800 3.200z" fill="#5f5f5f" stroke="none"/></svg>
<svg class="abs" style="left:1005px;top:610px" width="18" height="18" viewBox="0 0 18 18" fill="none" stroke="#5f5f5f" stroke-width="1.300"><path d="M.8 5.500V.8h4.200M13 .8h4.200v4.700M17.200 12.500v4.700H13M5 17.200H.8v-4.700" stroke-dasharray="2.400 .9"/><path d="M5 5l8 8M13 5l-8 8" stroke-width="1.700"/><path d="M3.500 3.500h3.800L3.500 7.300zM14.500 3.500h-3.800l3.800 3.800zM3.500 14.500h3.800l-3.800-3.800zM14.500 14.500h-3.800l3.800-3.800z" fill="#5f5f5f" stroke="none"/></svg>
<svg class="abs" style="left:1033px;top:610px" width="18" height="18" viewBox="0 0 18 18" fill="none" stroke="#5f5f5f"><circle cx="7.400" cy="7.200" r="5.600" stroke-width="2.500"/><rect x="4.900" y="4.800" width="5" height="4.800" fill="#5f5f5f" stroke="none"/><path d="M11.800 11.800L16.600 16.600" stroke-width="3"/></svg>
<svg class="abs" style="left:1063px;top:611px" width="18" height="16" viewBox="0 0 18 16" fill="#5f5f5f"><path d="M3 2h15v4.800H3L0.500 4.400zM3 9.200h15V14H3L0.500 11.600z"/></svg>
<svg class="abs" style="left:1092px;top:610px" width="18" height="17" viewBox="0 0 18 17" fill="#5f5f5f"><path d="M5.500 3l1.200-2h4.600l1.200 2H16a1.800 1.800 0 0 1 1.800 1.800V14A1.800 1.800 0 0 1 16 15.800H2A1.800 1.800 0 0 1 .2 14V4.800A1.800 1.800 0 0 1 2 3zM9 5.200a4.200 4.200 0 1 0 0 8.400 4.200 4.200 0 0 0 0-8.400zm0 1.900a2.300 2.300 0 1 1 0 4.600 2.300 2.300 0 0 1 0-4.600z" fill-rule="evenodd"/></svg>
<svg class="abs" style="left:262px;top:640px" width="880" height="260" viewBox="262 640 880 260" font-family="DejaVu Sans, Liberation Sans, sans-serif">
<rect x="315.500" y="647.500" width="698" height="208" fill="#f1f5fd" stroke="#333" stroke-width="1.2"/>
<path d="M316 677.7H1013" stroke="#ebeef4" stroke-width="1"/>
<path d="M316 711H1013" stroke="#ebeef4" stroke-width="1"/>
<path d="M316 744.7H1013" stroke="#ebeef4" stroke-width="1"/>
<path d="M316 778.5H1013" stroke="#ebeef4" stroke-width="1"/>
<path d="M316 812H1013" stroke="#ebeef4" stroke-width="1"/>
<path d="M316 845.5H1013" stroke="#ebeef4" stroke-width="1"/>
<path d="M416.7 655V855" stroke="#ebeef4" stroke-width="1"/>
<path d="M523.8 655V855" stroke="#ebeef4" stroke-width="1"/>
<path d="M630.9 655V855" stroke="#ebeef4" stroke-width="1"/>
<path d="M738 655V855" stroke="#ebeef4" stroke-width="1"/>
<path d="M845.6 655V855" stroke="#ebeef4" stroke-width="1"/>
<path d="M952.7 655V855" stroke="#ebeef4" stroke-width="1"/>
<text x="313" y="681.1" text-anchor="end" font-size="9.300" fill="#444">2,500</text>
<text x="313" y="714.4" text-anchor="end" font-size="9.300" fill="#444">2,000</text>
<text x="313" y="748.1" text-anchor="end" font-size="9.300" fill="#444">1,500</text>
<text x="313" y="781.9" text-anchor="end" font-size="9.300" fill="#444">1,000</text>
<text x="313" y="815.4" text-anchor="end" font-size="9.300" fill="#444">500</text>
<text x="313" y="848.9" text-anchor="end" font-size="9.300" fill="#444">0</text>
<text x="416.7" y="867.200" text-anchor="middle" font-size="9.300" fill="#444">00:00:00</text>
<text x="523.8" y="867.200" text-anchor="middle" font-size="9.300" fill="#444">00:00:00</text>
<text x="630.9" y="867.200" text-anchor="middle" font-size="9.300" fill="#444">00:00:00</text>
<text x="738" y="867.200" text-anchor="middle" font-size="9.300" fill="#444">00:00:00</text>
<text x="845.6" y="867.200" text-anchor="middle" font-size="9.300" fill="#444">00:00:00</text>
<text x="952.7" y="867.200" text-anchor="middle" font-size="9.300" fill="#444">00:00:00</text>
<text x="664" y="882.500" text-anchor="middle" font-size="13.200" fill="#444">Time (hh:mm:ss)</text>
<text transform="translate(285,751) rotate(-90)" text-anchor="middle" font-size="13" fill="#444">Energy (kwh)</text>
<path d="M325.0 846v-1h3.200v1zM329.3 846v-1h3.200v1zM333.6 846v-1h3.200v1zM337.9 846v-1h3.200v1zM342.2 846v-1h3.200v1zM343.5 846v-2.2h3.200v2.2zM347.8 846v-2.2h3.200v2.2zM352.1 846v-2.2h3.200v2.2zM356.4 846v-2.2h3.200v2.2zM360.7 846v-2.2h3.200v2.2zM365.0 846v-2.2h3.200v2.2zM369.3 846v-2.2h3.200v2.2zM373.6 846v-2.2h3.200v2.2zM377.9 846v-2.2h3.200v2.2zM382.2 846v-2.2h3.200v2.2zM386.5 846v-2.2h3.200v2.2zM390.8 846v-2.2h3.200v2.2zM395.1 846v-2.2h3.200v2.2zM399.4 846v-2.2h3.200v2.2zM403.7 846v-2.2h3.200v2.2zM408.0 846v-2.2h3.200v2.2zM412.3 846v-2.2h3.200v2.2zM414.0 846v-1h3.200v1zM418.3 846v-1h3.200v1zM422.6 846v-1h3.200v1zM426.9 846v-1h3.200v1zM431.2 846v-1h3.200v1zM435.5 846v-1h3.200v1zM439.8 846v-1h3.200v1zM444.1 846v-1h3.200v1zM446.0 846v-2.4h3.200v2.4zM450.3 846v-2.4h3.200v2.4zM454.6 846v-2.4h3.200v2.4zM458.9 846v-2.4h3.200v2.4zM463.2 846v-2.4h3.200v2.4zM467.5 846v-2.4h3.200v2.4zM471.8 846v-2.4h3.200v2.4zM476.1 846v-2.4h3.200v2.4zM480.4 846v-2.4h3.200v2.4zM484.7 846v-2.4h3.200v2.4zM489.0 846v-2.4h3.200v2.4zM493.3 846v-2.4h3.200v2.4zM497.6 846v-2.4h3.200v2.4zM501.9 846v-2.4h3.200v2.4zM506.2 846v-2.4h3.200v2.4zM510.5 846v-2.4h3.200v2.4zM514.8 846v-2.4h3.200v2.4zM519.1 846v-2.4h3.200v2.4zM520.5 846v-1h3.200v1zM524.8 846v-1h3.200v1zM529.1 846v-1h3.200v1zM533.4 846v-1h3.200v1zM537.7 846v-1h3.200v1zM542.0 846v-1h3.200v1zM546.3 846v-1h3.200v1zM550.6 846v-1h3.200v1zM554.9 846v-1h3.200v1zM559.2 846v-1h3.200v1zM562.0 846v-2.4h3.200v2.4zM566.3 846v-2.4h3.200v2.4zM570.6 846v-2.4h3.200v2.4zM574.9 846v-2.4h3.200v2.4zM579.2 846v-2.4h3.200v2.4zM583.5 846v-2.4h3.200v2.4zM587.8 846v-2.4h3.200v2.4zM592.1 846v-2.4h3.200v2.4zM596.4 846v-2.4h3.200v2.4zM600.7 846v-2.4h3.200v2.4zM605.0 846v-2.4h3.200v2.4zM609.3 846v-2.4h3.200v2.4zM613.6 846v-2.4h3.200v2.4zM617.9 846v-2.4h3.200v2.4zM622.2 846v-2.4h3.200v2.4zM626.5 846v-2.4h3.200v2.4zM628.0 846v-1h3.200v1zM632.3 846v-1h3.200v1zM636.6 846v-1h3.200v1zM640.9 846v-1h3.200v1zM645.2 846v-1h3.200v1zM649.5 846v-1h3.200v1zM653.8 846v-1h3.200v1zM655.5 846v-2h3.200v2zM659.8 846v-2h3.200v2zM664.1 846v-2h3.200v2zM668.4 846v-2h3.200v2zM672.7 846v-2h3.200v2zM677.0 846v-2h3.200v2zM768.0 846v-1h3.200v1zM772.3 846v-1h3.200v1zM776.6 846v-1h3.200v1zM780.9 846v-1h3.200v1zM785.2 846v-1h3.200v1zM789.5 846v-1h3.200v1zM793.8 846v-1h3.200v1zM798.1 846v-1h3.200v1zM802.4 846v-1h3.200v1zM806.7 846v-1h3.200v1zM811.0 846v-1h3.200v1zM812.0 846v-2h3.200v2zM816.3 846v-2h3.200v2zM820.6 846v-2h3.200v2zM824.9 846v-2h3.200v2zM829.2 846v-2h3.200v2zM833.5 846v-2h3.200v2zM837.8 846v-2h3.200v2zM842.0 846v-1h3.200v1zM846.3 846v-1h3.200v1zM850.6 846v-1h3.200v1zM854.9 846v-1h3.200v1zM859.2 846v-1h3.200v1zM863.5 846v-1h3.200v1zM867.8 846v-1h3.200v1zM872.1 846v-1h3.200v1zM876.4 846v-1h3.200v1zM879.0 846v-2.2h3.200v2.2zM883.3 846v-2.2h3.200v2.2zM887.6 846v-2.2h3.200v2.2zM891.9 846v-2.2h3.200v2.2zM896.2 846v-2.2h3.200v2.2zM900.5 846v-2.2h3.200v2.2zM904.8 846v-2.2h3.200v2.2zM909.1 846v-2.2h3.200v2.2zM913.4 846v-2.2h3.200v2.2zM917.7 846v-2.2h3.200v2.2zM922.0 846v-2.2h3.200v2.2zM926.3 846v-2.2h3.200v2.2zM930.6 846v-2.2h3.200v2.2zM934.9 846v-2.2h3.200v2.2zM939.2 846v-2.2h3.200v2.2zM943.5 846v-2.2h3.200v2.2zM947.8 846v-2.2h3.200v2.2zM949.0 846v-1h3.200v1zM953.3 846v-1h3.200v1zM957.6 846v-1h3.200v1zM961.9 846v-1h3.200v1zM966.2 846v-1h3.200v1zM970.5 846v-1h3.200v1zM974.8 846v-1h3.200v1zM979.1 846v-1h3.200v1z" fill="#3f83f1"/>
<path d="M982.2 846V767.7h3.300V846zM986.5 846V736h3.300V846zM990.8 846V705.2h3.300V846zM995.1 846V674h3.300V846zM999.4 846V666.5h3.300V846z" fill="#3f83f1"/>
<rect x="1037.500" y="657.500" width="77" height="27" fill="#fff" stroke="#d9d9d9"/>
<rect x="1051" y="666" width="11" height="10.500" fill="#3f83f1"/>
<text x="1074.800" y="675.300" font-size="10.600" fill="#333" font-family="Liberation Sans, sans-serif">Energy</text>
</svg>
<!-- table card -->
<div class="card" style="left:1164px;top:594.5px;width:524px;height:316px;border-color:#333"></div>
<div class="abs" style="left:1179px;top:612px;width:151px;height:33px;border-radius:17px;background:#fff;border:1px solid #dcdde6"></div>
<div class="t" style="left:1187px;top:621px;font-size:11.300px;line-height:14px;color:#8a8fa3">Search...</div>
<div class="abs" style="left:1180px;top:653px;width:494px;height:238px;background:#e6e9f0;overflow:hidden">
<div class="abs" style="left:1px;top:1px;width:237px;height:41px;background:#f5f7fc"></div>
<div class="abs" style="left:240px;top:1px;width:237px;height:41px;background:#f5f7fc"></div>
<div class="abs" style="left:478px;top:0;width:16px;height:238px;background:#f5f7fc"></div>
<div class="t b" style="left:12px;top:14px;font-size:12.500px;line-height:15px;color:#222;letter-spacing:-0.250px">Time Stamp</div>
<div class="t b" style="left:250.500px;top:14px;font-size:12.500px;line-height:15px;color:#222;letter-spacing:-0.250px">Energy</div>
<svg class="abs" style="left:216px;top:16px" width="9" height="7" viewBox="0 0 9 7" stroke="#555" stroke-width="1.500"><path d="M0 1h9M1.700 3.500h5.600M3.400 6h2.200"/></svg>
<svg class="abs" style="left:454.5px;top:16px" width="9" height="7" viewBox="0 0 9 7" stroke="#555" stroke-width="1.500"><path d="M0 1h9M1.700 3.500h5.600M3.400 6h2.200"/></svg>
<div class="abs" style="left:1px;top:44px;width:237px;height:34px;background:#fff"></div>
<div class="abs" style="left:240px;top:44px;width:237px;height:34px;background:#fff"></div>
<div class="cell" style="left:12px;top:53px">23/01/2026 09:30:00</div>
<div class="cell" style="left:250.500px;top:53px">7.2</div>
<div class="abs" style="left:1px;top:80px;width:237px;height:34px;background:#fff"></div>
<div class="abs" style="left:240px;top:80px;width:237px;height:34px;background:#fff"></div>
<div class="cell" style="left:12px;top:89px">23/01/2026 10:30:00</div>
<div class="cell" style="left:250.500px;top:89px">7.39</div>
<div class="abs" style="left:1px;top:116px;width:237px;height:34px;background:#fff"></div>
<div class="abs" style="left:240px;top:116px;width:237px;height:34px;background:#fff"></div>
<div class="cell" style="left:12px;top:125px">23/01/2026 10:30:00</div>
<div class="cell" style="left:250.500px;top:125px">7.53</div>
<div class="abs" style="left:1px;top:152px;width:237px;height:34px;background:#fff"></div>
<div class="abs" style="left:240px;top:152px;width:237px;height:34px;background:#fff"></div>
<div class="cell" style="left:12px;top:161px">23/01/2026 10:30:00</div>
<div class="cell" style="left:250.500px;top:161px">8.04</div>
<div class="abs" style="left:1px;top:188px;width:237px;height:34px;background:#fff"></div>
<div class="abs" style="left:240px;top:188px;width:237px;height:34px;background:#fff"></div>
<div class="cell" style="left:12px;top:197px">23/01/2026 10:30:00</div>
<div class="cell" style="left:250.500px;top:197px">8.37</div>
<div class="abs" style="left:1px;top:224px;width:237px;height:34px;background:#fff"></div>
<div class="abs" style="left:240px;top:224px;width:237px;height:34px;background:#fff"></div>
<div class="cell" style="left:12px;top:233px">23/01/2026 11:30:00</div>
<div class="cell" style="left:250.500px;top:233px">9.1</div>
</div>
<div class="abs" style="left:1661px;top:702px;width:0;height:0;border-left:4.500px solid transparent;border-right:4.500px solid transparent;border-bottom:6px solid #555"></div>
<div class="abs" style="left:1661.500px;top:714px;width:8px;height:18px;border-radius:4px;background:#7d7d7d"></div>
<div class="abs" style="left:1661px;top:878px;width:0;height:0;border-left:4.500px solid transparent;border-right:4.500px solid transparent;border-top:6px solid #555"></div>



</div>

</div>
</body>
</html>
